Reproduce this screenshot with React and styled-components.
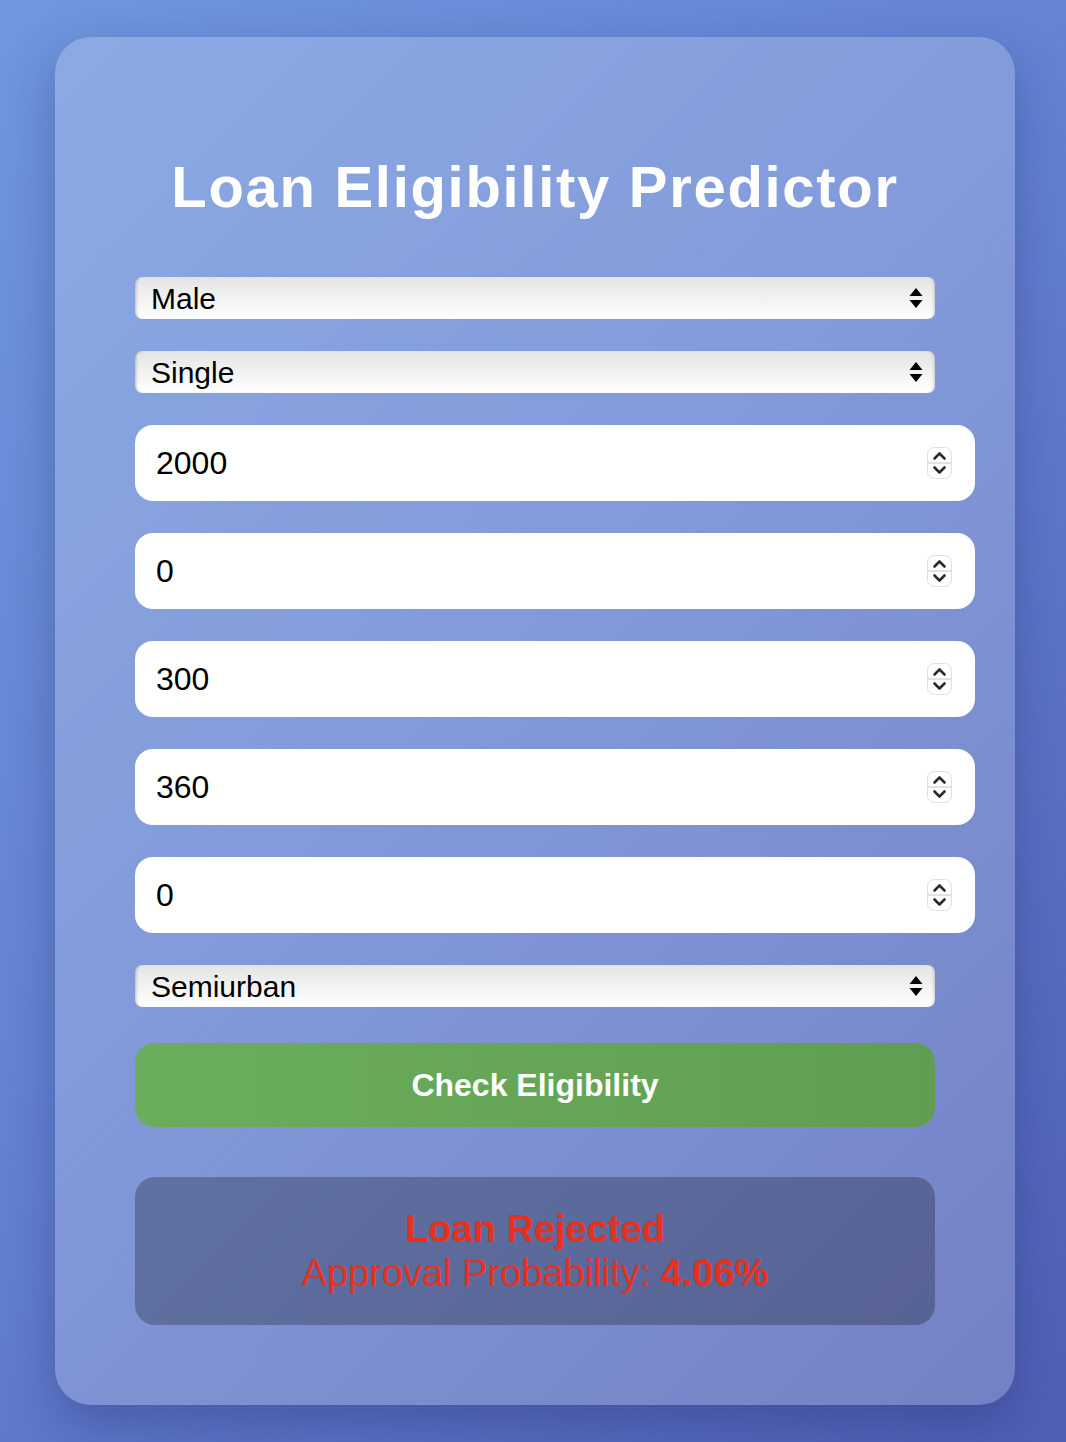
import React, { useState } from 'react';
import styled, { createGlobalStyle } from 'styled-components';

const GlobalStyle = createGlobalStyle`
  html, body {
    margin: 0;
    padding: 0;
  }

  body {
    font-family: 'Liberation Sans', Arial, Helvetica, sans-serif;
    background: linear-gradient(135deg, #6f97de 0%, #6482d2 45%, #505fb4 100%);
    min-height: 1442px;
  }
`;

function SelectArrows() {
  return (
    <ArrowIcon width="16" height="22" viewBox="0 0 16 22">
      <path d="M8 1 L14.5 9 L1.5 9 Z" fill="#000" />
      <path d="M8 21 L14.5 13 L1.5 13 Z" fill="#000" />
    </ArrowIcon>
  );
}

function Spinner() {
  return (
    <SpinBox>
      <svg width="25" height="32" viewBox="0 0 25 32">
        <rect x="0.5" y="0.5" width="24" height="31" rx="7" fill="#fff" stroke="#e0e0e0" />
        <line x1="1" y1="16" x2="24" y2="16" stroke="#d8d8d8" strokeWidth="1.5" />
        <path d="M7.5 11.5 L12.5 6.5 L17.5 11.5" fill="none" stroke="#2a2a2a" strokeWidth="2.6" strokeLinecap="round" strokeLinejoin="round" />
        <path d="M7.5 20.5 L12.5 25.5 L17.5 20.5" fill="none" stroke="#2a2a2a" strokeWidth="2.6" strokeLinecap="round" strokeLinejoin="round" />
      </svg>
    </SpinBox>
  );
}

function App() {
  const [form, setForm] = useState({
    gender: 'Male',
    married: 'Single',
    income: '2000',
    coIncome: '0',
    amount: '300',
    term: '360',
    credit: '0',
    area: 'Semiurban'
  });

  const update = (key) => (e) => setForm({ ...form, [key]: e.target.value });

  const numberFields = ['income', 'coIncome', 'amount', 'term', 'credit'];

  return (
    <>
      <GlobalStyle />
      <Page>
        <Card>
          <Title>Loan Eligibility Predictor</Title>
          <Form onSubmit={(e) => e.preventDefault()}>
            <SelectWrap>
              <Select value={form.gender} onChange={update('gender')}>
                <option>Male</option>
                <option>Female</option>
              </Select>
              <SelectArrows />
            </SelectWrap>
            <SelectWrap>
              <Select value={form.married} onChange={update('married')}>
                <option>Single</option>
                <option>Married</option>
              </Select>
              <SelectArrows />
            </SelectWrap>

            {numberFields.map((key) => (
              <InputWrap key={key}>
                <NumberInput type="number" value={form[key]} onChange={update(key)} />
                <Spinner />
              </InputWrap>
            ))}

            <SelectWrap>
              <Select value={form.area} onChange={update('area')}>
                <option>Urban</option>
                <option>Semiurban</option>
                <option>Rural</option>
              </Select>
              <SelectArrows />
            </SelectWrap>

            <SubmitButton type="submit">Check Eligibility</SubmitButton>
          </Form>

          <Result>
            <ResultTitle>Loan Rejected</ResultTitle>
            <ResultLine>
              Approval Probability: <b>4.06%</b>
            </ResultLine>
          </Result>
        </Card>
      </Page>
    </>
  );
}

export default App;

const Page = styled.div`
  display: flex;
  justify-content: center;
  padding: 37px 0 37px 4px;
`;

const Card = styled.div`
  width: 800px;
  padding: 80px;
  border-radius: 36px;
  background: rgba(255, 255, 255, 0.2);
  box-shadow: 0 20px 50px rgba(20, 30, 90, 0.3);
`;

const Title = styled.h1`
  margin: 36px 0 57px;
  text-align: center;
  color: #fff;
  font-size: 58px;
  font-weight: 700;
  letter-spacing: 1.7px;
`;

const Form = styled.form`
  display: flex;
  flex-direction: column;
  row-gap: 32px;
`;

const SelectWrap = styled.div`
  position: relative;
  width: 800px;
  height: 42px;
`;

const Select = styled.select`
  appearance: none;
  -webkit-appearance: none;
  width: 100%;
  height: 100%;
  padding: 0 0 0 16px;
  border: none;
  border-radius: 7px;
  background: linear-gradient(to bottom, #e4e4e4 0%, #f3f3f3 55%, #ffffff 100%);
  box-shadow: inset 3px 0 3px -2px rgba(0, 0, 0, 0.25), inset -3px 0 3px -2px rgba(0, 0, 0, 0.2);
  color: #000;
  font-family: 'Liberation Sans', Arial, sans-serif;
  font-size: 30px;
  outline: none;
`;

const ArrowIcon = styled.svg`
  position: absolute;
  right: 11px;
  top: 10px;
  pointer-events: none;
`;

const InputWrap = styled.div`
  position: relative;
  width: 840px;
  height: 76px;
`;

const NumberInput = styled.input`
  box-sizing: border-box;
  width: 100%;
  height: 100%;
  padding: 0 21px;
  border: none;
  border-radius: 18px;
  background: #fff;
  color: #000;
  font-family: 'Liberation Sans', Arial, sans-serif;
  font-size: 32px;
  outline: none;
  -moz-appearance: textfield;

  &::-webkit-inner-spin-button,
  &::-webkit-outer-spin-button {
    -webkit-appearance: none;
    margin: 0;
  }
`;

const SpinBox = styled.div`
  position: absolute;
  right: 23px;
  top: 22px;
  width: 25px;
  height: 32px;
  pointer-events: none;

  & svg {
    display: block;
  }
`;

const SubmitButton = styled.button`
  margin-top: 4px;
  width: 800px;
  height: 84px;
  border: none;
  border-radius: 20px;
  background: linear-gradient(to right, #6aae5c, #5f9e52);
  color: #fff;
  font-family: 'Liberation Sans', Arial, sans-serif;
  font-size: 32px;
  font-weight: 700;
  cursor: pointer;
`;

const Result = styled.div`
  margin-top: 50px;
  padding: 30px 0;
  border-radius: 20px;
  background: rgba(0, 0, 0, 0.25);
  text-align: center;
  color: #e5311f;
  font-size: 38px;
  line-height: 44px;
`;

const ResultTitle = styled.div`
  font-weight: 700;
`;

const ResultLine = styled.div`
  & b {
    font-weight: 700;
  }
`;
